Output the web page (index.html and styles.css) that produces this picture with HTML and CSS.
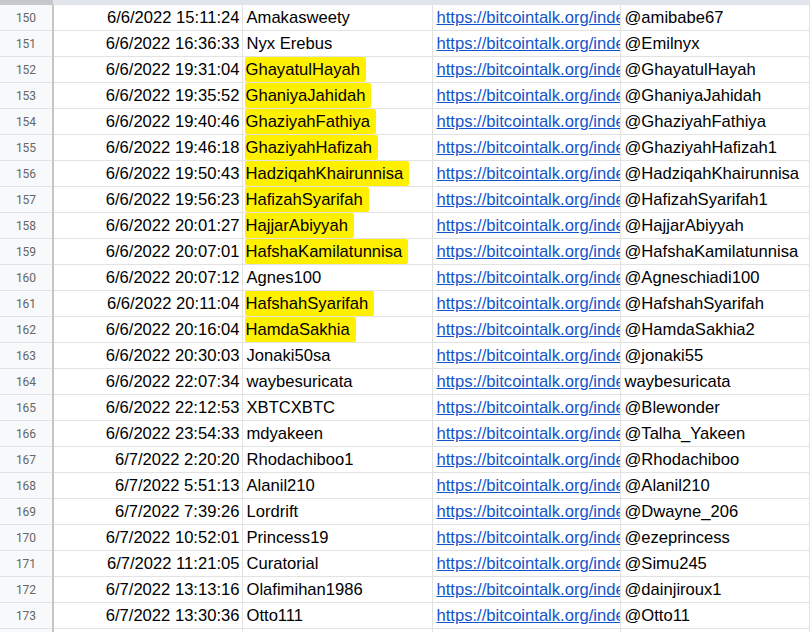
FILE: index.html
```html
<!DOCTYPE html>
<html lang="en">
<head>
<meta charset="UTF-8" />
<title>Sheet</title>
<link rel="stylesheet" href="styles.css">
</head>
<body>
<div class="topbar"><div class="corner"></div><div class="colheads"></div></div>
<table class="sheet">
  <colgroup>
    <col class="c-num"><col class="c-time"><col class="c-name"><col class="c-link"><col class="c-user">
  </colgroup>
  <tbody id="rows"></tbody>
</table>

<script>
  const rows = [
    ["6/6/2022 15:11:24", "Amakasweety", "@amibabe67", false],
    ["6/6/2022 16:36:33", "Nyx Erebus", "@Emilnyx", false],
    ["6/6/2022 19:31:04", "GhayatulHayah", "@GhayatulHayah", true],
    ["6/6/2022 19:35:52", "GhaniyaJahidah", "@GhaniyaJahidah", true],
    ["6/6/2022 19:40:46", "GhaziyahFathiya", "@GhaziyahFathiya", true],
    ["6/6/2022 19:46:18", "GhaziyahHafizah", "@GhaziyahHafizah1", true],
    ["6/6/2022 19:50:43", "HadziqahKhairunnisa", "@HadziqahKhairunnisa", true],
    ["6/6/2022 19:56:23", "HafizahSyarifah", "@HafizahSyarifah1", true],
    ["6/6/2022 20:01:27", "HajjarAbiyyah", "@HajjarAbiyyah", true],
    ["6/6/2022 20:07:01", "HafshaKamilatunnisa", "@HafshaKamilatunnisa", true],
    ["6/6/2022 20:07:12", "Agnes100", "@Agneschiadi100", false],
    ["6/6/2022 20:11:04", "HafshahSyarifah", "@HafshahSyarifah", true],
    ["6/6/2022 20:16:04", "HamdaSakhia", "@HamdaSakhia2", true],
    ["6/6/2022 20:30:03", "Jonaki50sa", "@jonaki55", false],
    ["6/6/2022 22:07:34", "waybesuricata", "waybesuricata", false],
    ["6/6/2022 22:12:53", "XBTCXBTC", "@Blewonder", false],
    ["6/6/2022 23:54:33", "mdyakeen", "@Talha_Yakeen", false],
    ["6/7/2022 2:20:20", "Rhodachiboo1", "@Rhodachiboo", false],
    ["6/7/2022 5:51:13", "Alanil210", "@Alanil210", false],
    ["6/7/2022 7:39:26", "Lordrift", "@Dwayne_206", false],
    ["6/7/2022 10:52:01", "Princess19", "@ezeprincess", false],
    ["6/7/2022 11:21:05", "Curatorial", "@Simu245", false],
    ["6/7/2022 13:13:16", "Olafimihan1986", "@dainjiroux1", false],
    ["6/7/2022 13:30:36", "Otto111", "@Otto11", false],
  ];

  const body = document.getElementById("rows");
  rows.forEach((r, i) => {
    const tr = document.createElement("tr");
    const name = r[3] ? '<span class="hl">' + r[1] + '</span>' : r[1];
    tr.innerHTML = `
      <th>${150 + i}</th>
      <td class="time">${r[0]}</td>
      <td>${name}</td>
      <td class="link"><a href="#">https://bitcointalk.org/inde</a></td>
      <td>${r[2]}</td>
    `;
    body.appendChild(tr);
  });
  const last = document.createElement("tr");
  last.innerHTML = "<th>174</th><td></td><td></td><td></td><td></td>";
  body.appendChild(last);
</script>
</body>
</html>
```
FILE: styles.css
```css
body { margin: 0; background: #fff; font-family: "Liberation Sans", Arial, sans-serif; overflow: hidden; }
.topbar { display: flex; height: 5px; }
.corner { width: 53px; background: #c6c9cc; }
.colheads { flex: 1; background: #e1e4ea; }
.sheet { border-collapse: collapse; table-layout: fixed; width: 809px; }
.c-num { width: 53px; }
.c-time { width: 189px; }
.c-name { width: 190px; }
.c-link { width: 188px; }
.c-user { width: 189px; }
.sheet th { background: #f8f9fa; color: #666; font-weight: normal; font-size: 12px; font-family: Roboto, "Liberation Sans", sans-serif; height: 25px; padding: 0; border-bottom: 1px solid #e2e2e2; border-right: 2px solid #c4c7c5; }
.sheet td { height: 24px; padding: 1px 2px 0 4px; font-size: 16.6px; color: #000; white-space: nowrap; overflow: hidden; border: 1px solid #e2e2e2; border-top: none; }
.sheet td.time { text-align: right; }
.sheet td.link { padding-right: 0; }
.sheet a { color: #1155cc; text-decoration: underline; }
.hl { background: #fff000; padding: 3px 6px 3px 1px; margin-left: -2px; border-radius: 2px; }
```
